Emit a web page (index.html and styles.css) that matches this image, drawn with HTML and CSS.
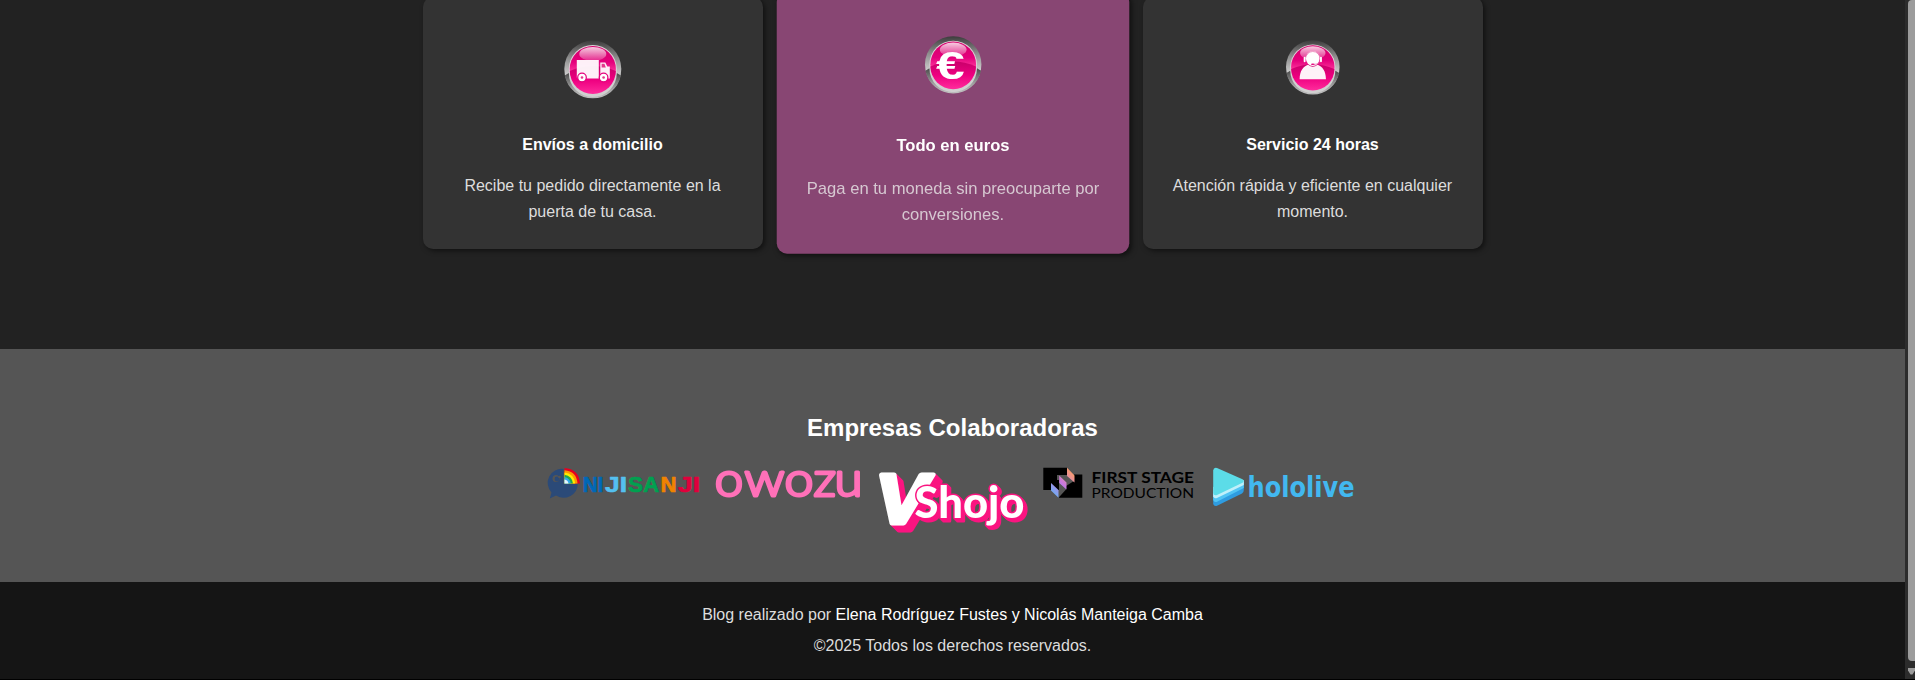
FILE: index.html
```html
<!DOCTYPE html>
<html lang="es">
<head>
<meta charset="utf-8">
<title>Servicios y colaboradores</title>
<link rel="stylesheet" href="styles.css">
</head>
<body>
<svg class="defs" width="0" height="0" aria-hidden="true">
  <defs>
    <linearGradient id="rimTop" x1="0" y1="0" x2="0" y2="1"><stop offset="0" stop-color="#3c3c3c"/><stop offset=".3" stop-color="#8c8c8c"/><stop offset=".62" stop-color="#d0d0d0"/></linearGradient>
    <linearGradient id="rimLow" x1="0" y1="0" x2="0" y2="1"><stop offset="0" stop-color="#4a4a4a"/><stop offset=".6" stop-color="#a0a0a0"/><stop offset="1" stop-color="#c0c0c0"/></linearGradient>
    <linearGradient id="pinkTop" x1="0" y1="0" x2="0" y2="1"><stop offset="0" stop-color="#d4006a"/><stop offset=".35" stop-color="#e4007c"/><stop offset=".6" stop-color="#ff3ca0"/></linearGradient>
    <linearGradient id="pinkLow" x1="0" y1="0" x2="0" y2="1"><stop offset="0" stop-color="#c8006a"/><stop offset=".5" stop-color="#ee0080"/><stop offset="1" stop-color="#ff2c9c"/></linearGradient>
    <linearGradient id="gloss" x1="0" y1="0" x2="0" y2="1"><stop offset="0" stop-color="#fff" stop-opacity=".8"/><stop offset="1" stop-color="#fff" stop-opacity=".15"/></linearGradient>
    <g id="button">
      <circle r="28.5" fill="url(#rimTop)"/>
      <path d="M-28.1 6.500L-24 4A24 24 0 0 0 24 4L28.1 6.500A28.700 28.700 0 0 1-28.1 6.500Z" fill="url(#rimLow)"/>
      <circle r="24" fill="#e0d4da"/>
      <circle r="23.100" fill="url(#pinkTop)"/>
      <path d="M-23 2Q0-8 23 2A23 23 0 0 1-23 2Z" fill="url(#pinkLow)"/>
      <ellipse cy="-15" rx="13.500" ry="7" fill="url(#gloss)"/>
    </g>
    <linearGradient id="ribbon" gradientUnits="userSpaceOnUse" x1="8" y1="28" x2="31" y2="5"><stop offset="0" stop-color="#62b4f4"/><stop offset=".5" stop-color="#c878e0"/><stop offset="1" stop-color="#ffa060"/></linearGradient>
  </defs>
</svg>
<div class="window">
  <main class="page">
    <section class="services">
      <article class="card">
        <svg class="card-icon" viewBox="0 0 100 100">
          <g transform="translate(49.800 49)"><use href="#button"/>
            <path d="M-16-9H6V9.500H-7A4 4 0 0 0-15 9.500L-16 8.500ZM7.500-6.500H12.500L14.500-2.500H17V9.500H15A4 4 0 0 0 7.500 7Z" fill="#fff" fill-opacity=".94"/>
            <path d="M8.800-5.300H11.700L13-1.500H8.800Z" fill="#e4388c"/>
            <g fill="#fff" stroke="#e4007c" stroke-width="1.200"><circle cx="-10.800" cy="8.500" r="4.300"/><circle cx="10.800" cy="8.500" r="4.300"/></g>
            <g fill="#e4388c"><circle cx="-10.800" cy="8.500" r="1.300"/><circle cx="10.800" cy="8.500" r="1.300"/></g>
          </g>
        </svg>
        <h3>Envíos a domicilio</h3>
        <p>Recibe tu pedido directamente en la puerta de tu casa.</p>
      </article>
      <article class="card card-active">
        <svg class="card-icon" viewBox="0 0 100 100">
          <g transform="translate(50.200 46.500) scale(.955)"><use href="#button"/>
            <text class="euro" x="-17.500" y="14.500" textLength="29" lengthAdjust="spacingAndGlyphs">€</text>
          </g>
        </svg>
        <h3>Todo en euros</h3>
        <p>Paga en tu moneda sin preocuparte por conversiones.</p>
      </article>
      <article class="card">
        <svg class="card-icon" viewBox="0 0 100 100">
          <g transform="translate(49.800 47) scale(.94)"><use href="#button"/>
            <path d="M-14 13C-14 4-10-1-5-2.500Q0 2 5-2.500C10-1 14 4 14 13Z" fill="#fff" fill-opacity=".95"/>
            <ellipse cy="-9" rx="7.300" ry="8" fill="#fff"/>
            <path d="M-8-8A8 8.500 0 0 1 8-8M8-7Q7-3 1-2.800" fill="none" stroke="#e878b0" stroke-width=".8"/>
            <path d="M-8.700-10V-6M8.700-10V-6" stroke="#fff" stroke-width="2" stroke-linecap="round"/>
            <ellipse cx="0" cy="-3" rx="2" ry=".8" fill="#e4007c"/>
          </g>
        </svg>
        <h3>Servicio 24 horas</h3>
        <p>Atención rápida y eficiente en cualquier momento.</p>
      </article>
    </section>

    <section class="partners">
      <h2>Empresas Colaboradoras</h2>
      <div class="logos">
        <svg class="logo niji" viewBox="0 0 150 70">
          <path d="M15.500 2V16.500H29.800A14.200 14.200 0 0 1 8 28.500L1.800 31.500 3.500 25.500A14 14 0 0 1 15.500 2Z" fill="#2b4a78"/>
          <path d="M16.500 1V16.500H32Q31 2 16.500 1Z" fill="#e60020"/>
          <path d="M16.500 3.200V16.500H29.500Q28.500 4 16.500 3.200Z" fill="#ff9a00"/>
          <path d="M16.500 5.400V16.500H27.300Q26 6.500 16.500 5.400Z" fill="#ffee00"/>
          <path d="M16.500 7.800V16.500H25Q24 9 16.500 7.800Z" fill="#20a850"/>
          <path d="M16.500 10V16.500H22.800Q22 11 16.500 10Z" fill="#30a8e8"/>
          <path d="M16.500 12.500V16.500H20.500Q20 13 16.500 12.500Z" fill="#e8f4ff"/>
          <circle cx="8" cy="11.500" r="3.500" fill="#555"/><circle cx="9" cy="12" r="2.400" fill="#2b4a78"/><circle cx="11.500" cy="10" r="1.300" fill="#555"/>
          <text y="24.500"><tspan x="34.800" textLength="20.500" lengthAdjust="spacingAndGlyphs" fill="#0068b7" stroke="#0068b7">NI</tspan><tspan x="57" textLength="22" lengthAdjust="spacingAndGlyphs" fill="#54c0f0" stroke="#54c0f0">JI</tspan><tspan x="80" textLength="31" lengthAdjust="spacingAndGlyphs" fill="#00a050" stroke="#00a050">SA</tspan><tspan x="112.500" textLength="16" lengthAdjust="spacingAndGlyphs" fill="#f08300" stroke="#f08300">N</tspan><tspan x="130" textLength="22" lengthAdjust="spacingAndGlyphs" fill="#e0003c" stroke="#e0003c">JI</tspan></text>
        </svg>
        <svg class="logo owozu" viewBox="0 0 150 70">
          <text y="28.500"><tspan x="1.800" textLength="28.500" lengthAdjust="spacingAndGlyphs">o</tspan><tspan x="31.500" textLength="40" lengthAdjust="spacingAndGlyphs">w</tspan><tspan x="71.500" textLength="29" lengthAdjust="spacingAndGlyphs">o</tspan><tspan x="100.500" textLength="22.500" lengthAdjust="spacingAndGlyphs">z</tspan><tspan x="121.500" textLength="28" lengthAdjust="spacingAndGlyphs">u</tspan></text>
        </svg>
        <svg class="logo vshojo" viewBox="0 0 150 70">
          <g class="extrude"><text class="big-v" transform="translate(-6 55.500) skewX(-11)" textLength="52" lengthAdjust="spacingAndGlyphs">V</text></g>
          <g class="extrude small"><text class="shojo" x="36.500" y="50.500" textLength="110" lengthAdjust="spacingAndGlyphs">Shojo</text></g>
        </svg>
        <svg class="logo stage" viewBox="0 0 150 70">
          <path d="M.300.700H24V8H14V13H16V23H.300ZM31 7.500H39.300V30.700H15.500L23 22.500V19L31 14Z"/>
          <path d="M24 .700L31.500 8.500V15.500L24 9ZM16.200 8.500L23.500 15.500V22.500L16.200 16ZM8 16L15.500 23V30.700L8 23.500Z" fill="url(#ribbon)"/>
          <text class="first" x="48.500" y="15.500" textLength="102.500" lengthAdjust="spacingAndGlyphs">FIRST STAGE</text>
          <text class="production" x="48.500" y="30.700" textLength="102.500" lengthAdjust="spacingAndGlyphs">PRODUCTION</text>
        </svg>
        <svg class="logo holo" viewBox="0 0 150 70">
          <path d="M5.200 25V37Q6 39.500 9 38.700L34 26.500Q35.800 25.500 35.800 23V14Z" fill="#2f9ce0"/>
          <path d="M5.200 24V33Q6 35.500 9 34.700L35.800 21V14Z" fill="#50c4f4"/>
          <path d="M5.200 20V29.500Q6 32 9 31L35.800 18V13Z" fill="#c0f0fa"/>
          <path d="M5.200 3.500Q5.500 0 9 1L34.500 12.300Q37 14 34.500 15.700L9 28Q5.500 29 5.200 26Z" fill="#5cdce8"/>
          <text x="39.500" y="30.300" textLength="107" lengthAdjust="spacingAndGlyphs">hololive</text>
        </svg>
      </div>
    </section>

    <footer class="footer">
      <p>Blog realizado por <a>Elena Rodríguez Fustes y Nicolás Manteiga Camba</a></p>
      <p>©2025 Todos los derechos reservados.</p>
    </footer>
  </main>
  <div class="scrollbar"><div class="thumb"></div><svg class="arrow" viewBox="0 0 7 7"><path d="M0 0H7V2.500L4.500 6.500H2.500L0 2.500Z" fill="#9c9c9c"/></svg></div>
</div>
</body>
</html>
```
FILE: styles.css
```css
* { box-sizing: border-box; margin: 0; padding: 0; }
body {
  height: 680px;
  overflow: hidden;
  background: #222;
  color: #ddd;
  font: 16px/1.6 "Liberation Sans", Arial, sans-serif;
}
.defs { display: block; }
.window { display: flex; height: 680px; border-bottom: 1px solid #000; }
.page { width: 1905px; display: flex; flex-direction: column; text-align: center; }

.services {
  height: 349px;
  display: flex;
  justify-content: center;
  align-items: flex-start;
  gap: 20px;
}
.card {
  width: 340px;
  height: 252px;
  margin-top: -3px;
  padding: 23px 25px;
  background: #333;
  border-radius: 10px;
  box-shadow: 2px 2px 5px rgba(0, 0, 0, .5);
}
.card-active { background: #884673; color: #d6c8d1; transform: scale(1.037); }
.card-icon { display: block; width: 100px; height: 100px; margin: 0 auto 12px; }
.card h3 { font-size: 16px; color: #fff; margin-bottom: 15.4px; }
.euro { font: bold 39px "Liberation Sans", Arial, sans-serif; fill: #fff; }

.partners { height: 233px; padding-top: 60px; background: #555; }
.partners h2 { font-size: 24px; color: #fff; margin-bottom: 20px; }
.logos { display: flex; justify-content: center; gap: 15px; }
.logo { width: 150px; height: 70px; overflow: visible; }
.niji text { font: bold 22.5px "Liberation Sans", sans-serif; stroke-width: .7px; stroke-linejoin: round; }
.owozu text { font: 300 47px Lato, sans-serif; fill: #ff70b8; stroke: #ff70b8; stroke-width: 3px; stroke-linejoin: round; }
.vshojo text { fill: #fff; stroke: #fff; stroke-linejoin: round; }
.big-v { font: bold 70px "Liberation Sans", sans-serif; stroke-width: 5px; }
.vshojo .shojo { font: 900 43px Lato, sans-serif; stroke: #fa1480; stroke-width: 3px; paint-order: stroke; }
.extrude { filter: drop-shadow(1px 1px 0 #fa1480) drop-shadow(2px 2px 0 #fa1480) drop-shadow(4px 4px 0 #fa1480); }
.extrude.small { filter: drop-shadow(1px 1px 0 #fa1480) drop-shadow(2px 2px 0 #fa1480); }
.first { font: bold 15.3px Lato, sans-serif; }
.production { font: 13.5px Lato, sans-serif; }
.holo text { font: bold 28px "DejaVu Sans Condensed", "DejaVu Sans", sans-serif; fill: #42b8f0; }

.footer { flex: 1; padding-top: 20px; background: #151515; }
.footer p + p { margin-top: 5px; }
.footer a { color: #fff; }

.scrollbar { width: 10px; padding-left: 3px; background: #2c2c2c; }
.thumb { height: 661px; background: #9c9c9c; border-radius: 4px 0 0 4px; }
.arrow { display: block; width: 7px; height: 7px; margin-top: 7px; }
```
